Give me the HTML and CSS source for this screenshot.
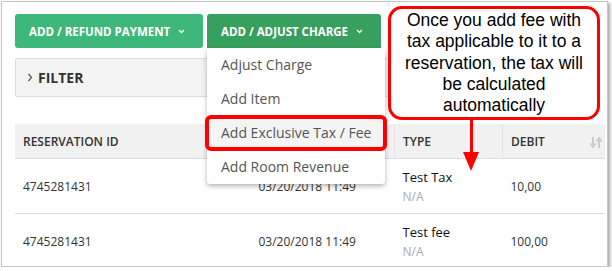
FILE: index.html
```html
<!DOCTYPE html>
<html lang="en">
<head>
    <meta charset="UTF-8">
    <meta name="viewport" content="width=device-width, initial-scale=1.0">
    <title>Folio</title>
    <link rel="stylesheet" href="styles.css">
</head>
<body>
    <div class="frame">
        <div class="toolbar">
            <button class="btn btn-light">ADD / REFUND PAYMENT
                <svg class="caret" width="7" height="5" viewBox="0 0 7 5"><polyline points="1,1 3.5,3.5 6,1" fill="none" stroke="#fff" stroke-width="1.3"/></svg>
            </button>
            <div class="dropdown">
                <button class="btn btn-dark">ADD / ADJUST CHARGE
                    <svg class="caret" width="7" height="5" viewBox="0 0 7 5"><polyline points="1,1 3.5,3.5 6,1" fill="none" stroke="#fff" stroke-width="1.3"/></svg>
                </button>
                <ul class="menu">
                    <li>Adjust Charge</li>
                    <li>Add Item</li>
                    <li class="active">Add Exclusive Tax / Fee</li>
                    <li>Add Room Revenue</li>
                </ul>
            </div>
        </div>

        <div class="filter">
            <svg width="6" height="9" viewBox="0 0 6 9"><polyline points="1.5,1 4.5,4.5 1.5,8" fill="none" stroke="#555" stroke-width="1.2"/></svg>
            FILTER
        </div>

        <table class="ledger">
            <thead>
                <tr>
                    <th class="c-id">RESERVATION ID</th>
                    <th class="c-date"></th>
                    <th class="c-type">TYPE</th>
                    <th class="c-debit">DEBIT
                        <svg class="sort" width="12" height="11" viewBox="0 0 12 11"><path d="M3 0v9M0.5 6.5 3 10 5.5 6.5" fill="none" stroke="#ccc" stroke-width="2"/><path d="M9 11V2M6.5 4.5 9 1 11.5 4.5" fill="none" stroke="#ccc" stroke-width="2"/></svg>
                    </th>
                </tr>
            </thead>
            <tbody>
                <tr>
                    <td>4745281431</td>
                    <td>03/20/2018 11:49</td>
                    <td><div class="type">Test Tax</div><div class="sub">N/A</div></td>
                    <td>10,00</td>
                </tr>
                <tr>
                    <td>4745281431</td>
                    <td>03/20/2018 11:49</td>
                    <td><div class="type">Test fee</div><div class="sub">N/A</div></td>
                    <td>100,00</td>
                </tr>
            </tbody>
        </table>

        <div class="callout">Once you add fee with tax applicable to it to a reservation, the tax will be calculated automatically</div>
        <div class="pointer"></div>
    </div>
</body>
</html>
```

FILE: styles.css
```css
body {
    margin: 0;
    background: #fff;
    font-family: "Open Sans", "Liberation Sans", sans-serif;
}

.frame {
    position: relative;
    margin: 1px 0 0 1px;
    width: 607px;
    height: 266px;
    border: 1px solid #c6c6c6;
    box-shadow: 2px 2px 3px rgba(0, 0, 0, 0.35);
    box-sizing: border-box;
    padding: 12px 0 0 13px;
    overflow: hidden;
}

.toolbar {
    display: flex;
    gap: 4px;
}

.btn {
    height: 34px;
    border: none;
    border-radius: 3px;
    color: #fff;
    font-family: "Open Sans", sans-serif;
    font-weight: 700;
    font-size: 11.5px;
    white-space: nowrap;
    padding: 0 14px;
    display: flex;
    align-items: center;
    gap: 8px;
}

.btn-light {
    background: #3db87a;
    width: 188px;
}

.btn-dark {
    background: #38a05f;
    width: 174px;
    border-radius: 3px 3px 0 0;
}

.caret {
    margin-top: 1px;
    flex: none;
}

.dropdown {
    position: relative;
}

.menu {
    position: absolute;
    top: 34px;
    left: 0;
    width: 178px;
    margin: 0;
    padding: 0;
    list-style: none;
    background: #fff;
    box-shadow: 0 2px 5px rgba(0, 0, 0, 0.3);
    border-radius: 0 0 3px 3px;
    z-index: 2;
}

.menu li {
    height: 34px;
    line-height: 34px;
    padding-left: 14px;
    font-size: 14px;
    color: #555;
}

.menu li.active {
    background: #f4f4f4;
    outline: 4px solid #f00;
    outline-offset: -3px;
    border-radius: 5px;
    position: relative;
    margin: 0 0 0 -1px;
    padding-left: 15px;
    width: 165px;
}

.filter {
    margin-top: 10px;
    width: 420px;
    height: 39px;
    box-sizing: border-box;
    background: #f3f3f3;
    border: 1px solid #dcdcdc;
    border-radius: 2px;
    display: flex;
    align-items: center;
    gap: 5px;
    padding-left: 11px;
    font-size: 14px;
    font-weight: 700;
    color: #333;
}

.ledger {
    margin-top: 27px;
    width: 590px;
    border-collapse: collapse;
    font-size: 12px;
    color: #333;
}

.ledger th {
    background: #f1f1f1;
    height: 34px;
    padding: 0 8px;
    text-align: left;
    font-size: 12px;
    font-weight: 600;
    color: #333;
    border-bottom: 1px solid #ddd;
}

.ledger th + th {
    border-left: 1px solid #e2e2e2;
}

.c-id { width: 217px; }
.c-date { width: 129px; }
.c-type { width: 91px; }

.c-debit {
    position: relative;
}

.sort {
    position: absolute;
    right: 3px;
    top: 13px;
}

.ledger td {
    height: 54px;
    padding: 0 8px;
    border-bottom: 1px solid #ddd;
}

.ledger td:nth-child(2) {
    padding-left: 10px;
}

.type {
    font-size: 13px;
    color: #111;
}

.sub {
    font-size: 12px;
    color: #aaa;
    margin-top: 2px;
}

.callout {
    position: absolute;
    left: 386px;
    top: 4px;
    width: 212px;
    height: 114px;
    box-sizing: border-box;
    border: 3px solid #f00;
    border-radius: 14px;
    background: #fff;
    padding: 1px 6px;
    font-family: "Liberation Sans", Arial, sans-serif;
    font-size: 17.5px;
    line-height: 21.3px;
    text-align: center;
    color: #000;
    z-index: 3;
}

.pointer {
    position: absolute;
    left: 468px;
    top: 118px;
    width: 3px;
    height: 32px;
    background: #f00;
    z-index: 3;
}

.pointer::after {
    content: "";
    position: absolute;
    left: -7px;
    top: 32px;
    border-left: 8.5px solid transparent;
    border-right: 8.5px solid transparent;
    border-top: 19px solid #f00;
}
```
